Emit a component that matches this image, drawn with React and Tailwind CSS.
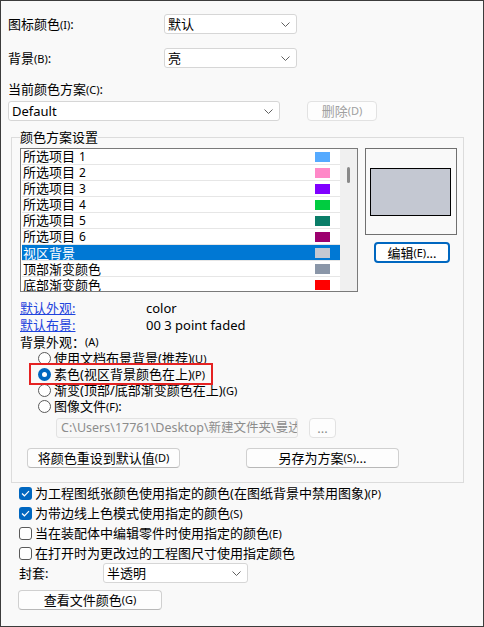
import React from 'react';

const swatches = [
  { name: '所选项目', n: '1', color: '#55aaff' },
  { name: '所选项目', n: '2', color: '#ff88c8' },
  { name: '所选项目', n: '3', color: '#8000ff' },
  { name: '所选项目', n: '4', color: '#00cc40' },
  { name: '所选项目', n: '5', color: '#0a7d68' },
  { name: '所选项目', n: '6', color: '#9c006e' },
  { name: '视区背景', color: '#c4c8d2', selected: true },
  { name: '顶部渐变颜色', color: '#8a96a8' },
  { name: '底部渐变颜色', color: '#ff0000' },
];

function Key({ children }) {
  return <span className="text-[11px]">{children}</span>;
}

function Chevron() {
  return (
    <svg width="9" height="5" viewBox="0 0 9 5" fill="none">
      <path d="M0.5 0.5 L4.5 4.5 L8.5 0.5" stroke="#606060" strokeWidth="1" />
    </svg>
  );
}

function Select({ value, className }) {
  return (
    <div className={`h-[20px] flex items-center justify-between bg-white border border-[#d6d6d6] rounded-[3px] pl-[3px] pr-[6px] ${className}`}>
      <span>{value}</span>
      <Chevron />
    </div>
  );
}

function Button({ children, className }) {
  return (
    <div className={`h-[20px] flex items-center justify-center bg-[#fdfdfd] border border-[#d0d0d0] border-b-[#b8b8b8] rounded-[4px] ${className}`}>
      {children}
    </div>
  );
}

function Radio({ checked }) {
  if (checked) {
    return (
      <span className="w-[13px] h-[13px] rounded-full bg-[#0067c0] flex items-center justify-center">
        <span className="w-[5px] h-[5px] rounded-full bg-white" />
      </span>
    );
  }
  return <span className="w-[13px] h-[13px] rounded-full bg-white border border-[#5a5a5a]" />;
}

function Checkbox({ checked }) {
  if (checked) {
    return (
      <span className="w-[13px] h-[13px] rounded-[3px] bg-[#0067c0] flex items-center justify-center">
        <svg width="9" height="7" viewBox="0 0 9 7" fill="none">
          <path d="M1 3.5 L3.4 5.8 L8 1.2" stroke="white" strokeWidth="1.2" />
        </svg>
      </span>
    );
  }
  return <span className="w-[13px] h-[13px] rounded-[3px] bg-white border border-[#5a5a5a]" />;
}

export default function App() {
  return (
    <div className="w-[484px] h-[627px] border border-[#3c3c3c] bg-[#f9f9f9] text-[13px] leading-[16px] text-black [font-family:'Noto_Sans','Noto_Sans_CJK_SC',sans-serif] overflow-hidden">
      <div className="pl-[7px] pt-[13px]">
        {/* 图标颜色 / 背景 */}
        <div className="flex items-center h-[20px]">
          <span className="w-[156px]">图标颜色<Key>(I)</Key>:</span>
          <Select value="默认" className="w-[133px]" />
        </div>
        <div className="flex items-center h-[20px] mt-[14px]">
          <span className="w-[156px]">背景<Key>(B)</Key>:</span>
          <Select value="亮" className="w-[133px]" />
        </div>

        <div className="mt-[13px] h-[16px]">当前颜色方案<Key>(C)</Key>:</div>
        <div className="flex items-center mt-[4px]">
          <Select value="Default" className="w-[272px]" />
          <Button className="ml-[27px] w-[70px] bg-[#f5f5f5] border-[#e2e2e2] border-b-[#e2e2e2] text-[#a0a0a0]">
            删除<Key>(D)</Key>
          </Button>
        </div>

        {/* 颜色方案设置 */}
        <fieldset className="mt-[8px] ml-[3px] w-[453px] border border-[#dcdcdc] pl-[8px] pr-[6px] pt-[3px] pb-[14px]">
          <legend className="h-[16px]">颜色方案设置</legend>
          <div className="flex">
            <div className="w-[338px] h-[144px] border border-[#7a7a7a] bg-white flex overflow-hidden">
              <div className="flex-1 pl-[1px]">
                {swatches.map((s, i) => (
                  <div key={i} className="h-[16px] border-b border-[#e6e6e6] flex">
                    <div className={`flex-1 h-[15px] flex items-center justify-between pl-[1px] pr-[10px] ${s.selected ? 'bg-[#0078d4] text-white' : ''}`}>
                      <span>
                        {s.name}
                        {s.n && <span className="ml-[4px] text-[12px]">{s.n}</span>}
                      </span>
                      <span className="w-[15px] h-[10px]" style={{ backgroundColor: s.color }} />
                    </div>
                  </div>
                ))}
              </div>
              <div className="w-[17px] bg-[#f0f0f0] flex justify-center pt-[18px]">
                <div className="w-[3px] h-[16px] rounded-full bg-[#8a8a8a]" />
              </div>
            </div>

            <div className="ml-[7px] w-[92px]">
              <div className="h-[87px] border border-[#707070] flex items-center justify-center pl-[1px] pr-[3px]">
                <div className="w-[81px] h-[48px] bg-[#c4c8d2] border border-black" />
              </div>
              <div className="mt-[7px] ml-[9px] w-[76px] h-[21px] flex items-center justify-center bg-white border-2 border-[#0067c0] rounded-[4px]">
                编辑<Key>(E)</Key>...
              </div>
            </div>
          </div>

          <div className="mt-[7px] h-[17px] flex items-center">
            <span className="w-[126px] text-[#1f44dd] underline">默认外观:</span>
            <span>color</span>
          </div>
          <div className="h-[17px] flex items-center">
            <span className="w-[126px] text-[#1f44dd] underline">默认布景:</span>
            <span>00 3 point faded</span>
          </div>
          <div className="h-[17px] flex items-center">背景外观：<Key>(A)</Key></div>

          <div className="pl-[18px]">
            <div className="h-[16px] flex items-center gap-[3px]">
              <Radio />
              <span>使用文档布景背景(推荐)<Key>(U)</Key></span>
            </div>
            <div className="relative h-[16px] flex items-center gap-[3px]">
              <Radio checked />
              <span>素色(视区背景颜色在上)<Key>(P)</Key></span>
              <div className="absolute -left-[9px] -top-[3px] w-[184px] h-[22px] border-2 border-[#e52222]" />
            </div>
            <div className="h-[16px] flex items-center gap-[3px]">
              <Radio />
              <span>渐变(顶部/底部渐变颜色在上)<Key>(G)</Key></span>
            </div>
            <div className="h-[16px] flex items-center gap-[3px]">
              <Radio />
              <span>图像文件<Key>(F)</Key>:</span>
            </div>
          </div>

          <div className="mt-[4px] ml-[36px] flex items-center">
            <div className="w-[242px] h-[20px] bg-[#f7f7f7] border border-[#e2e2e2] rounded-[3px] pl-[4px] flex items-center overflow-hidden whitespace-nowrap text-[#8c8c8c]">
              <span className="text-[12.5px]">C:\Users\17761\Desktop\新建文件夹\曼达洛</span>
            </div>
            <Button className="ml-[11px] w-[27px] bg-[#f5f5f5] border-[#e2e2e2] border-b-[#e2e2e2] text-[#8c8c8c]">...</Button>
          </div>

          <div className="mt-[10px] ml-[7px] flex">
            <Button className="w-[153px]">将颜色重设到默认值<Key>(D)</Key></Button>
            <Button className="ml-[66px] w-[153px]">另存为方案<Key>(S)</Key>...</Button>
          </div>
        </fieldset>

        {/* 选项 */}
        <div className="pl-[11px]">
          <div className="h-[20px] flex items-center gap-[3px]">
            <Checkbox checked />
            <span>为工程图纸张颜色使用指定的颜色(在图纸背景中禁用图象)<Key>(P)</Key></span>
          </div>
          <div className="h-[20px] flex items-center gap-[3px]">
            <Checkbox checked />
            <span>为带边线上色模式使用指定的颜色<Key>(S)</Key></span>
          </div>
          <div className="h-[20px] flex items-center gap-[3px]">
            <Checkbox />
            <span>当在装配体中编辑零件时使用指定的颜色<Key>(E)</Key></span>
          </div>
          <div className="h-[20px] flex items-center gap-[3px]">
            <Checkbox />
            <span>在打开时为更改过的工程图尺寸使用指定颜色</span>
          </div>
          <div className="h-[20px] flex items-center">
            <span className="w-[84px]">封套:</span>
            <Select value="半透明" className="w-[145px]" />
          </div>
          <Button className="mt-[7px] -ml-[1px] w-[144px]">查看文件颜色<Key>(G)</Key></Button>
        </div>
      </div>
    </div>
  );
}
